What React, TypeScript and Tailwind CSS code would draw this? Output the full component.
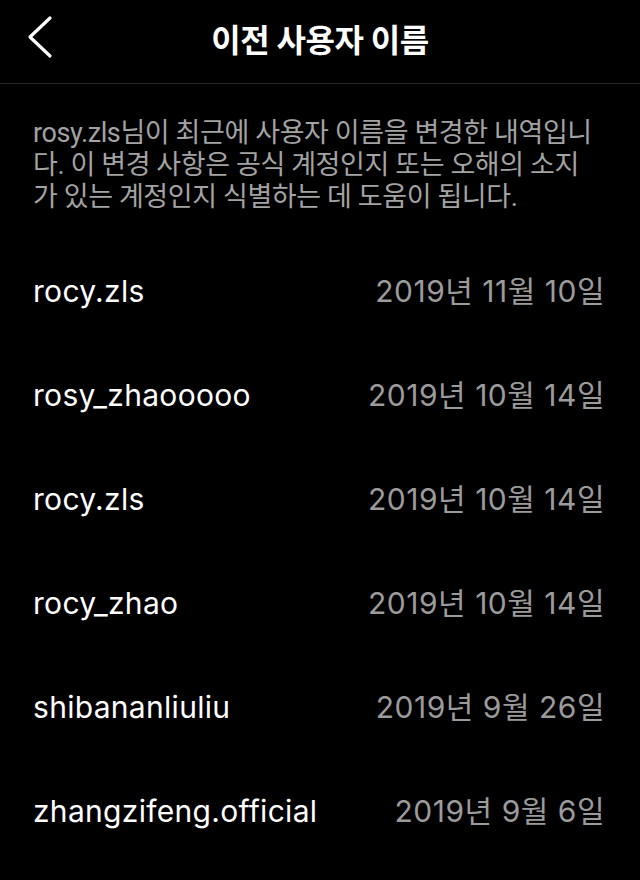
import React from "react";

const rows = [
  { name: "rocy.zls", date: "2019년 11월 10일" },
  { name: "rosy_zhaooooo", date: "2019년 10월 14일" },
  { name: "rocy.zls", date: "2019년 10월 14일" },
  { name: "rocy_zhao", date: "2019년 10월 14일" },
  { name: "shibananliuliu", date: "2019년 9월 26일" },
  { name: "zhangzifeng.official", date: "2019년 9월 6일" },
];

export default function App() {
  return (
    <div
      className="w-[640px] h-[880px] bg-black text-white overflow-hidden"
      style={{ fontFamily: '"Roboto", "Noto Sans CJK KR", sans-serif' }}
    >
      <header className="relative h-[84px] flex items-center justify-center border-b border-[#262626]">
        <button className="absolute left-[26px] top-[15px] w-[28px] h-[44px]">
          <svg width="28" height="44" viewBox="0 0 28 44" fill="none">
            <path
              d="M24 3 L4 22 L24 41"
              stroke="white"
              strokeWidth="3.2"
              strokeLinecap="round"
              strokeLinejoin="round"
            />
          </svg>
        </button>
        <h1 className="text-[32px] font-bold tracking-[-0.5px] -mt-[2px]">이전 사용자 이름</h1>
      </header>

      <p className="px-[33px] pt-[33px] text-[27px] leading-[32px] text-[#a3a3a3] tracking-[-0.4px]">
        <span className="block">rosy.zls님이 최근에 사용자 이름을 변경한 내역입니</span>
        <span className="block">다. 이 변경 사항은 공식 계정인지 또는 오해의 소지</span>
        <span className="block">가 있는 계정인지 식별하는 데 도움이 됩니다.</span>
      </p>

      <ul className="mt-[26px] px-[33px]">
        {rows.map((r, i) => (
          <li key={i} className="h-[104px] flex items-center justify-between">
            <span
              className="text-white text-[30px] tracking-[0.3px]"
              style={{ fontFamily: '"Inter", sans-serif' }}
            >
              {r.name}
            </span>
            <span
              className="text-[#9b9b9b] text-[30px] tracking-[0.5px] pr-[2px]"
              style={{ fontFamily: '"Inter", "Noto Sans CJK KR", sans-serif' }}
            >
              {r.date}
            </span>
          </li>
        ))}
      </ul>
    </div>
  );
}
